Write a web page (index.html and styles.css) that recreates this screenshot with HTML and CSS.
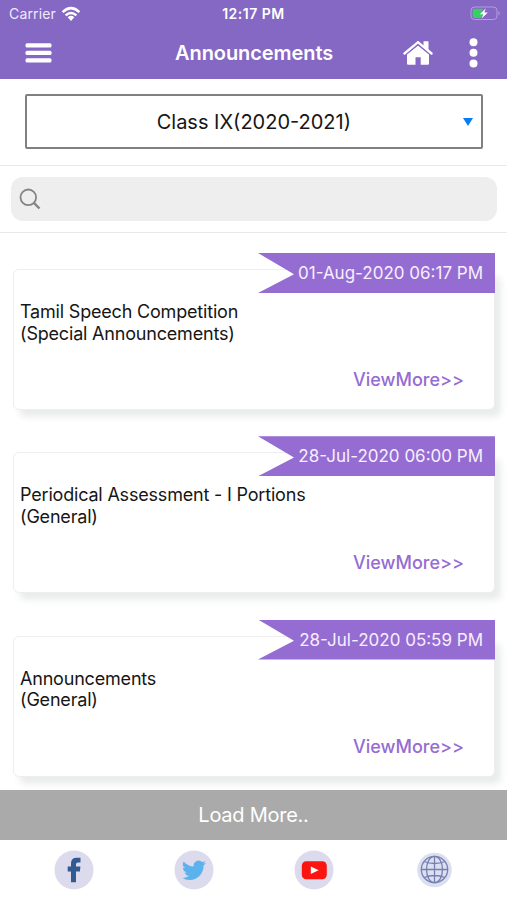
FILE: index.html
```html
<!DOCTYPE html>
<html lang="en">
<head>
<meta charset="utf-8">
<title>Announcements</title>
<link rel="stylesheet" href="styles.css">
</head>
<body>
<div class="app">
  <header class="header">
    <div class="status">
      <div class="carrier"><span>Carrier</span>
        <svg width="20" height="16" viewBox="0 0 20 16" fill="none" stroke="#fff" stroke-width="2.5"><path d="M1.6 6.1Q10 -1.8 18.4 6.1M4.6 9.4Q10 4.5 15.4 9.4"/><path d="M6.7 11.2Q10 8.5 13.3 11.2L10 14.9Z" fill="#fff" stroke="none"/></svg>
      </div>
      <span class="clock">12:17 PM</span>
      <svg class="battery" width="31" height="15" viewBox="0 0 31 15"><rect x="1" y="1" width="26" height="12.5" rx="3.5" fill="none" stroke="#b79de0"/><path d="M4.5 2.7H13L10.5 8H13L11.5 12H4.5Q2.7 12 2.7 10V4.7Q2.7 2.7 4.5 2.7Z" fill="#35cf62"/><path d="M28.5 5Q31 7.2 28.5 9.5Z" fill="#b79de0"/><path d="M15.8 2.2L9.8 8.2H13.2L11.7 12.6L17.8 6.5H14.3Z" fill="#fff"/></svg>
    </div>
    <div class="toolbar">
      <svg class="menu" width="27" height="20" viewBox="0 0 27 20" fill="#fff"><rect x=".5" y=".2" width="26" height="4.3" rx="1.5"/><rect x=".5" y="7.8" width="26" height="4.3" rx="1.5"/><rect x=".5" y="15.2" width="26" height="4.3" rx="1.5"/></svg>
      <h1 class="title">Announcements</h1>
      <svg class="home" width="30" height="26" viewBox="0 0 30 26"><path d="M15 5.6L26 14.6V23.5Q26 24.7 24.8 24.7H17.7V17.3H12.5V24.7H5.2Q4 24.7 4 23.5V14.6Z" fill="#fff"/><path d="M1.5 13.5L15 2.2L28.5 13.5" fill="none" stroke="#fff" stroke-width="2.4" stroke-linecap="round"/><path d="M3.4 14.3L15 4.7L26.6 14.3" fill="none" stroke="#8567c4" stroke-width=".9"/><path d="M20.5 1.3H25.5V10.8L20.5 6.6Z" fill="#fff"/></svg>
      <svg class="more" width="9" height="30" viewBox="0 0 9 30" fill="#fff"><circle cx="4.5" cy="4.2" r="4"/><circle cx="4.5" cy="14.8" r="4"/><circle cx="4.5" cy="25.5" r="4"/></svg>
    </div>
  </header>
  <section class="picker">
    <div class="select"><span class="select-text">Class IX(2020-2021)</span><i class="caret"></i></div>
  </section>
  <section class="search">
    <div class="search-box">
      <svg width="22" height="22" viewBox="0 0 22 22" fill="none" stroke="#858585"><circle cx="9.3" cy="9.3" r="7.8" stroke-width="1.8"/><path d="M14.6 14.6L20.5 20.5" stroke-width="2.4"/></svg>
    </div>
  </section>
  <main class="list">
    <article class="item">
      <div class="card"><p class="name">Tamil Speech Competition</p><p class="name">(Special Announcements)</p><a class="view">ViewMore&gt;&gt;</a></div>
      <div class="ribbon"><span class="date">01-Aug-2020 06:17 PM</span></div>
    </article>
    <article class="item">
      <div class="card"><p class="name">Periodical Assessment - I Portions</p><p class="name">(General)</p><a class="view">ViewMore&gt;&gt;</a></div>
      <div class="ribbon"><span class="date">28-Jul-2020 06:00 PM</span></div>
    </article>
    <article class="item">
      <div class="card"><p class="name">Announcements</p><p class="name">(General)</p><a class="view">ViewMore&gt;&gt;</a></div>
      <div class="ribbon"><span class="date">28-Jul-2020 05:59 PM</span></div>
    </article>
  </main>
  <div class="load"><span>Load More..</span></div>
  <footer class="social">
    <svg width="40" height="40" viewBox="0 0 40 40"><circle cx="20" cy="20" r="19.5" fill="#dcdbed"/><path d="M17 32.3V21.5H13.7V16.4H17V13.5Q17 7.7 22.5 7.7H26.5V12.5H24Q22 12.5 22 14.3V16.4H26.4L25.9 21.5H22V32.3Z" fill="#315a91"/></svg>
    <svg width="40" height="40" viewBox="0 0 40 40"><circle cx="20" cy="20" r="19.5" fill="#dcdbed"/><path transform="translate(8 8.3)" d="M23.95 4.57a10 10 0 0 1-2.82.77 4.96 4.96 0 0 0 2.16-2.72c-.95.55-2 .95-3.13 1.18a4.92 4.92 0 0 0-8.38 4.48C7.69 8.1 4.07 6.13 1.64 3.16a4.92 4.92 0 0 0 1.52 6.57 4.9 4.9 0 0 1-2.23-.61v.06a4.92 4.92 0 0 0 3.95 4.83 5 5 0 0 1-2.21.08 4.94 4.94 0 0 0 4.6 3.42A9.87 9.87 0 0 1 0 19.54a13.99 13.99 0 0 0 7.55 2.21c9.05 0 14-7.5 14-13.98 0-.21 0-.42-.02-.63a9.94 9.94 0 0 0 2.42-2.57Z" fill="#5cb2ec"/></svg>
    <svg width="40" height="40" viewBox="0 0 40 40"><circle cx="20" cy="20" r="19.5" fill="#dcdbed"/><rect x="7.8" y="11.2" width="25" height="18" rx="4.5" fill="#fb1510"/><path d="M16.8 16.5L24.6 20.2L16.8 24Z" fill="#fff"/></svg>
    <svg width="40" height="40" viewBox="0 0 40 40"><circle cx="20.5" cy="20" r="17.3" fill="#dcdff0"/><g transform="translate(.5 -.5)" fill="none" stroke="#7580b0" stroke-width="1.3"><circle cx="20" cy="20" r="13.2"/><ellipse cx="20" cy="20" rx="8" ry="13.2"/><path d="M20 6.8V33.2M6.8 20H33.2M9.5 12Q20 16 30.5 12M9.5 28Q20 24 30.5 28"/></g></svg>
  </footer>
</div>
</body>
</html>
```
FILE: styles.css
```css
* { box-sizing: border-box; }
body { margin: 0; background: #fff; font-family: Inter, "Liberation Sans", sans-serif; color: #161616; }
svg { display: block; flex: none; }
p, h1 { margin: 0; }
.app { width: 507px; height: 900px; overflow: hidden; display: flex; flex-direction: column; }
.header { height: 79px; flex: none; background: #8567c4; color: #fff; }
.status { height: 27px; display: grid; grid-template-columns: 1fr auto 1fr; align-items: center; padding: 0 6px 0 9px; font-size: 14px; }
.carrier { display: flex; align-items: center; gap: 5px; color: #f0eaff; letter-spacing: .15px; }
.clock { font-weight: 600; font-size: 14px; letter-spacing: .5px; margin-right: 3px; }
.battery { justify-self: end; }
.toolbar { height: 52px; display: flex; align-items: center; padding-left: 25px; }
.title { margin-left: 123px; width: 160px; font-size: 20px; line-height: 24px; font-weight: 600; letter-spacing: -.07px; white-space: nowrap; }
.home { margin-left: 68px; }
.more { margin-left: 36px; }
.picker { height: 87px; flex: none; padding: 15px 24px 0 25px; border-bottom: 1px solid #e9e9e9; }
.select { height: 55px; border: 2px solid #808080; border-radius: 2px; display: flex; align-items: center; justify-content: flex-end; padding-right: 8px; }
.select-text { font-size: 20px; margin-right: 112px; white-space: nowrap; }
.caret { border: 5px solid transparent; border-top: 8px solid #087cf7; border-bottom: 0; }
.search { height: 67px; flex: none; padding: 11px 10px 0 11px; border-bottom: 1px solid #e9e9e9; }
.search-box { height: 44px; border-radius: 12px; background: #eee; display: flex; align-items: center; padding-left: 8px; }
.list { height: 557px; flex: none; padding: 20px 12px 0 13px; overflow: hidden; }
.item { position: relative; height: 157px; padding-top: 16px; margin-bottom: 26.3px; }
.card { height: 141px; border: 1px solid #eee; border-radius: 6px; background: #fff; box-shadow: 6px 7px 7px #eaecec; padding: 31px 30px 0 6px; display: flex; flex-direction: column; align-items: flex-start; }
.name { font-size: 18px; line-height: 21.6px; letter-spacing: -.19px; white-space: nowrap; }
.view { align-self: flex-end; margin-top: 25px; font-size: 18px; line-height: 22px; font-weight: 500; color: #956cd2; }
.ribbon { position: absolute; top: 0; right: 0; width: 237px; height: 40px; background: #956cd2; clip-path: polygon(0 0, 100% 0, 100% 100%, 0 100%, 36px 53%); color: #f7efff; display: flex; align-items: center; justify-content: flex-end; padding-right: 12px; }
.date { font-size: 17px; white-space: nowrap; }
.load { height: 50px; flex: none; background: #aaa; color: #fff; display: flex; align-items: center; justify-content: center; font-size: 20px; letter-spacing: -.25px; }
.social { height: 60px; flex: none; display: flex; align-items: center; gap: 80px; padding-left: 54px; }
```
